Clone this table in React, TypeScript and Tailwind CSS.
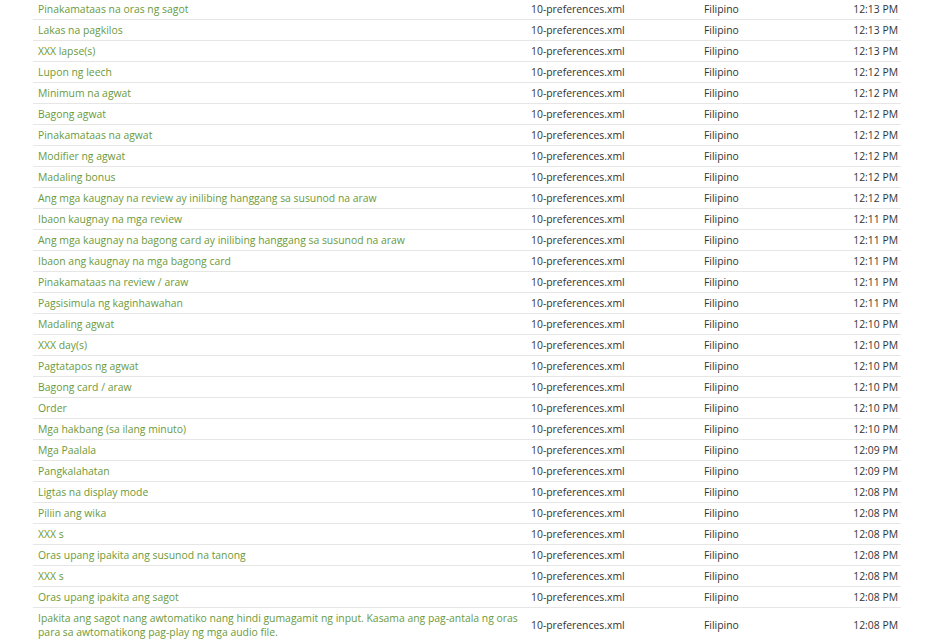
import React from "react";

const rows: [string, string][] = [
  ["Pinakamataas na oras ng sagot", "12:13 PM"],
  ["Lakas na pagkilos", "12:13 PM"],
  ["XXX lapse(s)", "12:13 PM"],
  ["Lupon ng leech", "12:12 PM"],
  ["Minimum na agwat", "12:12 PM"],
  ["Bagong agwat", "12:12 PM"],
  ["Pinakamataas na agwat", "12:12 PM"],
  ["Modifier ng agwat", "12:12 PM"],
  ["Madaling bonus", "12:12 PM"],
  ["Ang mga kaugnay na review ay inilibing hanggang sa susunod na araw", "12:12 PM"],
  ["Ibaon kaugnay na mga review", "12:11 PM"],
  ["Ang mga kaugnay na bagong card ay inilibing hanggang sa susunod na araw", "12:11 PM"],
  ["Ibaon ang kaugnay na mga bagong card", "12:11 PM"],
  ["Pinakamataas na review / araw", "12:11 PM"],
  ["Pagsisimula ng kaginhawahan", "12:11 PM"],
  ["Madaling agwat", "12:10 PM"],
  ["XXX day(s)", "12:10 PM"],
  ["Pagtatapos ng agwat", "12:10 PM"],
  ["Bagong card / araw", "12:10 PM"],
  ["Order", "12:10 PM"],
  ["Mga hakbang (sa ilang minuto)", "12:10 PM"],
  ["Mga Paalala", "12:09 PM"],
  ["Pangkalahatan", "12:09 PM"],
  ["Ligtas na display mode", "12:08 PM"],
  ["Piliin ang wika", "12:08 PM"],
  ["XXX s", "12:08 PM"],
  ["Oras upang ipakita ang susunod na tanong", "12:08 PM"],
  ["XXX s", "12:08 PM"],
  ["Oras upang ipakita ang sagot", "12:08 PM"],
  [
    "Ipakita ang sagot nang awtomatiko nang hindi gumagamit ng input. Kasama ang pag-antala ng oras para sa awtomatikong pag-play ng mga audio file.",
    "12:08 PM",
  ],
];

export default function App() {
  return (
    <div
      className="w-[932px] h-[642px] overflow-hidden bg-white"
      style={{ fontFamily: '"Open Sans", sans-serif' }}
    >
      <div className="ml-[33px] w-[868px] mt-[-1px]">
        <table className="w-full table-fixed border-collapse text-[10.4px] leading-[14px] text-[#333]">
          <colgroup>
            <col className="w-[493px]" />
            <col className="w-[173px]" />
            <col className="w-[100px]" />
            <col />
          </colgroup>
          <tbody>
            {rows.map(([label, time], i) => (
              <tr key={i} className="border-b border-[#e6e6e6]">
                <td className="pl-[5px] pr-0 py-[3px] text-[#6a9a3c] align-middle">{label}</td>
                <td className="pl-[5px] py-[3px] align-middle">10-preferences.xml</td>
                <td className="pl-[5px] py-[3px] align-middle">Filipino</td>
                <td className="pr-[3px] py-[3px] text-right align-middle">{time}</td>
              </tr>
            ))}
          </tbody>
        </table>
      </div>
    </div>
  );
}
